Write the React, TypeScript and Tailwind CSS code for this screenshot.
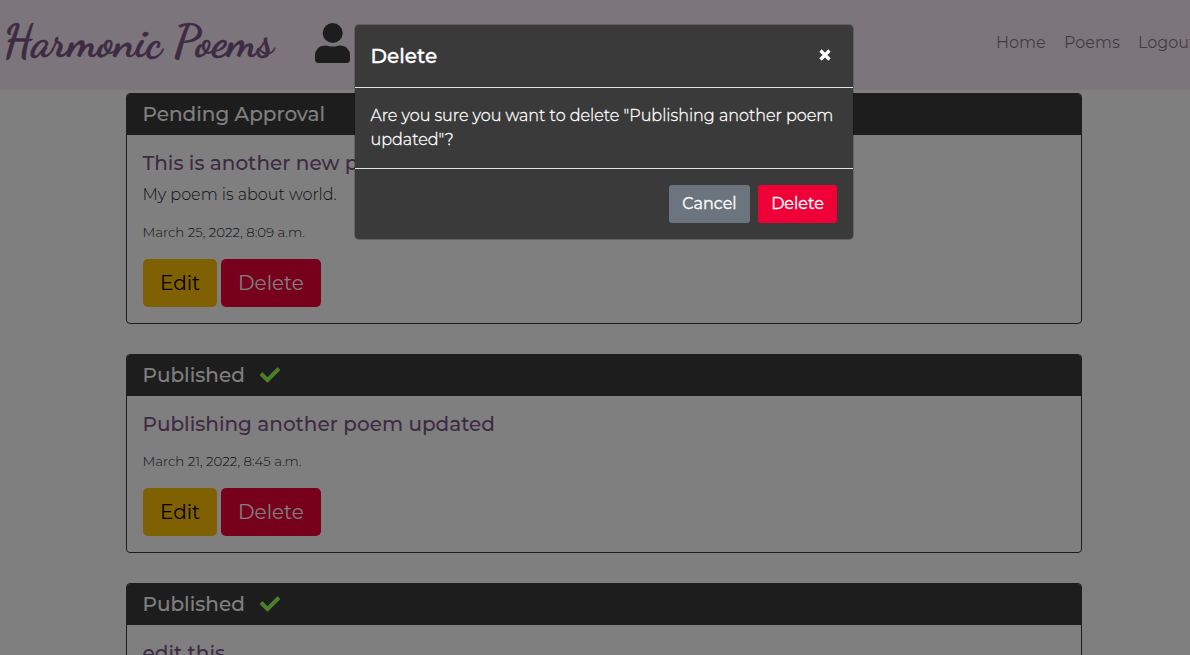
import type { ReactNode } from "react";

function Check() {
  return (
    <svg viewBox="0 0 512 512" className="ml-[15px] size-5 fill-[#98ff54]">
      <path d="M173.898 439.404l-166.4-166.4c-9.997-9.997-9.997-26.206 0-36.204l36.203-36.204c9.997-9.998 26.207-9.998 36.204 0L192 312.69 432.095 72.596c9.997-9.997 26.207-9.997 36.204 0l36.203 36.204c9.997 9.997 9.997 26.206 0 36.204l-294.4 294.401c-9.998 9.997-26.207 9.997-36.204-.001z" />
    </svg>
  );
}

function Card({ status, title, text, date }: { status: ReactNode; title: string; text?: string; date: string }) {
  return (
    <article className="overflow-hidden rounded border border-[#3a3a3a]">
      <header className="flex h-[41px] items-center bg-[#3a3a3a] px-[15.5px] pb-[2px] text-xl font-medium text-white">{status}</header>
      <div className="py-4">
        <h2 className="flex h-6 items-center px-[15.5px] text-xl font-medium text-[#7f5488]">{title}</h2>
        {text && <p className="mt-2 flex h-6 items-center px-[15.5px] text-base font-light text-[#212529]">{text}</p>}
        <p className="mt-[14px] flex h-[22px] items-center px-[15.5px] pt-px text-[13.33px] font-light text-[#212529]">{date}</p>
        <div className="mt-4 flex gap-1 px-4 text-xl">
          <button className="flex h-12 w-[74px] items-center justify-center rounded-[5px] bg-[#ffc107] text-black">Edit</button>
          <button className="flex h-12 w-[100px] items-center justify-center rounded-[5px] bg-[#ef0037] text-white">Delete</button>
        </div>
      </div>
    </article>
  );
}

const published = (
  <>
    Published
    <Check />
  </>
);

export default function App() {
  return (
    <div className="relative h-[655px] w-full overflow-hidden bg-white font-['Montserrat','Inter',sans-serif]">
      <nav className="flex h-[90px] items-start overflow-hidden bg-[#f9edf9] pl-[3px]">
        <div className="mt-[9px] h-[66px] w-[312px] whitespace-nowrap font-['Dancing_Script',cursive] text-[45px] leading-[66px] font-bold text-[#7f5488] [-webkit-text-stroke:0.5px_#7f5488]">Harmonic Poems</div>
        <svg viewBox="0 0 35 40" className="mt-[23px] h-10 w-[35px] fill-[#3a3a3a]">
          <circle cx="17.7" cy="10" r="10" />
          <path d="M0 35V33Q0 23 10 22.5Q12 22.5 14 23.2Q17.6 24 21.5 23.2Q23 22.5 25 22.5Q35 23 35 33V36.5Q35 40 31.5 40H3.5Q0 40 0 36.5Z" />
        </svg>
        <div className="mt-[31px] ml-auto -mr-[17px] flex h-6 shrink-0 items-center text-base text-black/50">
          <a className="w-[68px]">Home</a>
          <a className="w-[74px]">Poems</a>
          <a className="w-[69px]">Logout</a>
        </div>
      </nav>
      <main className="mt-[3px] ml-[126px] flex w-[956px] flex-col gap-[30px]">
        <Card status="Pending Approval" title="This is another new poem" text="My poem is about world." date="March 25, 2022, 8:09 a.m." />
        <Card status={published} title="Publishing another poem updated" date="March 21, 2022, 8:45 a.m." />
        <Card status={published} title="edit this" date="March 20, 2022, 7:30 p.m." />
      </main>
      <div className="absolute inset-0 bg-black/50 pt-6 pl-[354px]">
        <section role="dialog" className="w-[500px] rounded-[5px] border border-black/20 bg-[#3a3a3a] bg-clip-padding text-white">
          <header className="flex h-[63px] items-center justify-between border-b border-[#dee2e6] pr-[22px] pl-[15.5px] text-xl font-medium">
            <h5 className="[-webkit-text-stroke:0.3px_white]">Delete</h5>
            <svg viewBox="0 0 12 12" className="mb-[2px] size-3 stroke-white stroke-[3.2]"><path d="M1.5 1.5 10.5 10.5M10.5 1.5 1.5 10.5" /></svg>
          </header>
          <div className="h-20 px-[15.5px] pt-4 text-base leading-6 font-light [-webkit-text-stroke:0.3px_white]">
            Are you sure you want to delete "Publishing another poem updated"?
          </div>
          <footer className="flex h-[71px] justify-end gap-2 border-t border-[#dee2e6] pt-4 pr-4 text-base [-webkit-text-stroke:0.3px_white]">
            <button className="flex h-[38px] w-[81px] items-center justify-center rounded-[3px] bg-[#6c757d]">Cancel</button>
            <button className="flex h-[38px] w-[79px] items-center justify-center rounded-[3px] bg-[#ef0037]">Delete</button>
          </footer>
        </section>
      </div>
    </div>
  );
}
